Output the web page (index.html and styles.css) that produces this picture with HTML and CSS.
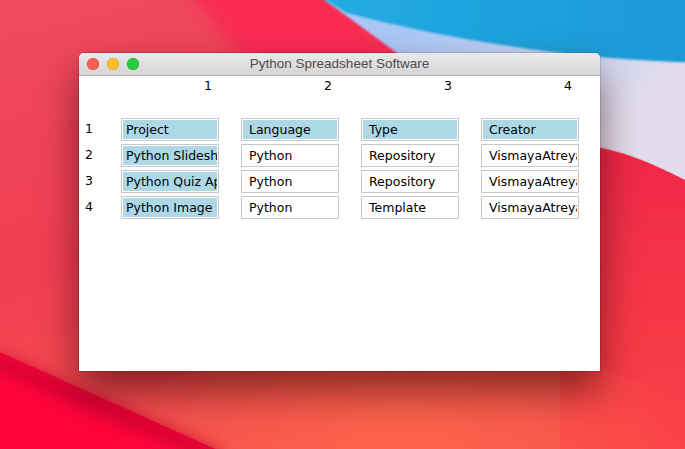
FILE: index.html
```html
<!DOCTYPE html>
<html lang="en">
<head>
<meta charset="utf-8">
<title>Python Spreadsheet Software</title>
<link rel="stylesheet" href="styles.css">
</head>
<body>
<div class="desktop">
  <svg class="wallpaper" viewBox="0 0 685 449" preserveAspectRatio="none" aria-hidden="true">
    <defs>
      <linearGradient id="gBase" x1="0" y1="0" x2="0.35" y2="1">
        <stop offset="0" stop-color="#ee4b5f"/>
        <stop offset="0.55" stop-color="#f13e52"/>
        <stop offset="1" stop-color="#f5534e"/>
      </linearGradient>
      <linearGradient id="gBlue" x1="0" y1="0" x2="1" y2="0">
        <stop offset="0" stop-color="#21ade3"/>
        <stop offset="1" stop-color="#1c96d5"/>
      </linearGradient>
      <linearGradient id="gLav" x1="420" y1="20" x2="560" y2="175" gradientUnits="userSpaceOnUse">
        <stop offset="0" stop-color="#aac7f6"/>
        <stop offset="0.55" stop-color="#c6d5f4"/>
        <stop offset="1" stop-color="#e2dcec"/>
      </linearGradient>
      <linearGradient id="gRight" x1="0" y1="0" x2="0" y2="1">
        <stop offset="0" stop-color="#ef2748"/>
        <stop offset="1" stop-color="#fb4546"/>
      </linearGradient>
      <radialGradient id="gCoral" cx="400" cy="455" r="280" gradientUnits="userSpaceOnUse">
        <stop offset="0" stop-color="#fc634b"/>
        <stop offset="1" stop-color="#fc634b" stop-opacity="0"/>
      </radialGradient>
      <filter id="blurBig" x="-20%" y="-20%" width="140%" height="140%"><feGaussianBlur stdDeviation="8"/></filter>
      <filter id="blurSmall"><feGaussianBlur stdDeviation="1.2"/></filter>
    </defs>
    <rect x="-20" y="-20" width="725" height="489" fill="url(#gBase)"/>
    <path d="M 180 -20 L 318 -20 L 430 80 L 300 130 Z" fill="#fb2351" filter="url(#blurBig)" opacity="0.75"/>
    <path d="M 330 -20 H 720 V 200 C 670 175 640 156 600 148 C 560 140 480 110 420 75 L 397 53 L 325 0 Z" fill="url(#gLav)" filter="url(#blurSmall)"/>
    <path d="M 600 148 C 640 156 670 172 720 198 V 470 H 560 L 560 142 Z" fill="url(#gRight)"/>
    <path d="M 318 -20 H 720 V 63 C 600 62 470 45 347 13 L 325 0 Z" fill="url(#gBlue)" filter="url(#blurSmall)"/>
    <ellipse cx="400" cy="450" rx="300" ry="110" fill="url(#gCoral)"/>
    <path d="M -20 343 L 240 460 L -20 470 Z" fill="#ff053c"/>
    <path d="M -10 358 L 220 458" stroke="#c4002e" stroke-width="12" fill="none" filter="url(#blurBig)" opacity="0.9"/>
  </svg>

  <div class="window">
    <div class="titlebar">
      <div class="lights">
        <span class="light light-close"></span>
        <span class="light light-min"></span>
        <span class="light light-max"></span>
      </div>
      <div class="title">Python Spreadsheet Software</div>
      <div class="titlebar-spacer"></div>
    </div>

    <div class="sheet">
      <div class="corner"></div>
      <div class="col-head">1</div>
      <div class="col-head">2</div>
      <div class="col-head">3</div>
      <div class="col-head">4</div>

      <div class="row-head">1</div>
      <div class="cell cell-hl cell-key"><span class="cell-text">Project</span></div>
      <div class="cell cell-hl"><span class="cell-text">Language</span></div>
      <div class="cell cell-hl"><span class="cell-text">Type</span></div>
      <div class="cell cell-hl"><span class="cell-text">Creator</span></div>

      <div class="row-head">2</div>
      <div class="cell cell-hl cell-key"><span class="cell-text">Python Slideshow</span></div>
      <div class="cell"><span class="cell-text">Python</span></div>
      <div class="cell"><span class="cell-text">Repository</span></div>
      <div class="cell"><span class="cell-text">VismayaAtreya</span></div>

      <div class="row-head">3</div>
      <div class="cell cell-hl cell-key"><span class="cell-text">Python Quiz App</span></div>
      <div class="cell"><span class="cell-text">Python</span></div>
      <div class="cell"><span class="cell-text">Repository</span></div>
      <div class="cell"><span class="cell-text">VismayaAtreya</span></div>

      <div class="row-head">4</div>
      <div class="cell cell-hl cell-key"><span class="cell-text">Python Image Editor</span></div>
      <div class="cell"><span class="cell-text">Python</span></div>
      <div class="cell"><span class="cell-text">Template</span></div>
      <div class="cell"><span class="cell-text">VismayaAtreya</span></div>
    </div>
  </div>
</div>
</body>
</html>
```

FILE: styles.css
```css
* {
  box-sizing: border-box;
}

html, body {
  margin: 0;
  padding: 0;
}

body {
  width: 685px;
  height: 449px;
  overflow: hidden;
  font-family: "DejaVu Sans", "Liberation Sans", sans-serif;
}

.desktop {
  position: relative;
  width: 685px;
  height: 449px;
  overflow: hidden;
  padding: 53px 0 0 79px;
}

.wallpaper {
  position: absolute;
  left: 0;
  top: 0;
  width: 685px;
  height: 449px;
  display: block;
}

.window {
  position: relative;
  width: 521px;
  height: 318px;
  background: #ffffff;
  border-radius: 5px 5px 0 0;
  box-shadow: 0 20px 38px rgba(45, 0, 0, 0.55), 0 0 0 0.5px rgba(0, 0, 0, 0.25);
  display: flex;
  flex-direction: column;
}

.titlebar {
  height: 23px;
  flex: none;
  display: grid;
  grid-template-columns: 1fr auto 1fr;
  align-items: center;
  background: linear-gradient(#ebe9eb, #d6d4d6);
  border-bottom: 1px solid #b4b3b4;
  border-radius: 5px 5px 0 0;
}

.lights {
  display: flex;
  gap: 8px;
  padding-left: 8px;
  padding-bottom: 1px;
}

.light {
  width: 12px;
  height: 12px;
  border-radius: 50%;
  display: block;
}

.light-close {
  background: #fc5f57;
  box-shadow: inset 0 0 0 0.5px #e0443e;
}

.light-min {
  background: #fdbc2e;
  box-shadow: inset 0 0 0 0.5px #dea123;
}

.light-max {
  background: #28c840;
  box-shadow: inset 0 0 0 0.5px #1aab29;
}

.title {
  font-family: "Liberation Sans", Arial, sans-serif;
  font-size: 13.5px;
  color: #4b4b4b;
  line-height: 22px;
  white-space: nowrap;
}

.sheet {
  display: grid;
  grid-template-columns: 20px repeat(4, 98px);
  grid-template-rows: 39px repeat(4, 23px);
  column-gap: 22px;
  row-gap: 3px;
  font-size: 12.5px;
  color: #000;
}

.col-head {
  align-self: start;
  height: 20px;
  line-height: 20px;
  text-align: right;
  padding-right: 7px;
}

.row-head {
  padding-left: 6px;
  line-height: 21px;
}

.cell {
  border: 1px solid #c8c8c8;
  padding: 1px;
  background: #ffffff;
  display: flex;
  overflow: hidden;
}

.cell-text {
  flex: 1;
  min-width: 0;
  overflow: hidden;
  white-space: nowrap;
  line-height: 19px;
  padding-left: 6px;
}

.cell-hl .cell-text {
  background: #add8e6;
}

.cell-key .cell-text {
  padding-left: 3px;
}
```
